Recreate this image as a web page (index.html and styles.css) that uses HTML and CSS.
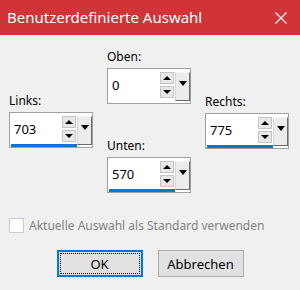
FILE: index.html
```html
<!DOCTYPE html>
<html lang="de">
<head>
  <meta charset="UTF-8" />
  <title>Benutzerdefinierte Auswahl</title>
  <link rel="stylesheet" href="styles.css">
</head>
<body>
  <div class="dialog">
    <div class="titlebar">
      <span class="title">Benutzerdefinierte Auswahl</span>
      <svg class="close" width="12" height="12" viewBox="0 0 12 12">
        <path d="M0.5 0.5 L11.5 11.5 M11.5 0.5 L0.5 11.5" stroke="#fff" stroke-width="1.1" fill="none" />
      </svg>
    </div>

    <div class="content">
      <div class="fields">
        <div class="col side">
          <div class="field">
            <label>Links:</label>
            <div class="spin">
              <div class="edit"><span class="value">703</span><div class="arrows"><span class="arrow up"></span><span class="arrow down"></span></div></div>
              <span class="drop"></span>
            </div>
          </div>
        </div>

        <div class="col middle">
          <div class="field">
            <label>Oben:</label>
            <div class="spin">
              <div class="edit plain"><span class="value">0</span><div class="arrows"><span class="arrow up"></span><span class="arrow down"></span></div></div>
              <span class="drop"></span>
            </div>
          </div>
          <div class="field">
            <label>Unten:</label>
            <div class="spin">
              <div class="edit"><span class="value">570</span><div class="arrows"><span class="arrow up"></span><span class="arrow down"></span></div></div>
              <span class="drop"></span>
            </div>
          </div>
        </div>

        <div class="col side right">
          <div class="field">
            <label>Rechts:</label>
            <div class="spin">
              <div class="edit"><span class="value">775</span><div class="arrows"><span class="arrow up"></span><span class="arrow down"></span></div></div>
              <span class="drop"></span>
            </div>
          </div>
        </div>
      </div>

      <div class="check">
        <span class="checkbox"></span>
        <span class="check-label">Aktuelle Auswahl als Standard verwenden</span>
      </div>

      <div class="buttons">
        <button class="btn default"><span class="focus">OK</span></button>
        <button class="btn">Abbrechen</button>
      </div>
    </div>
  </div>
</body>
</html>
```

FILE: styles.css
```css
body { margin: 0; background: #f0f0f0; font-family: "Noto Sans", "Open Sans", sans-serif; font-size: 12px; color: #000; }
.dialog { width: 300px; height: 290px; overflow: hidden; }

.titlebar { height: 35px; background: #d13438; display: flex; align-items: center; justify-content: space-between; padding: 0 13px 0 7px; box-sizing: border-box; }
.title { color: #fff; font-size: 15px; line-height: 20px; margin-top: -1px; }
.close { display: block; }

.content { padding: 14px 0 0 9px; }
.fields { display: flex; gap: 14px; }
.col { display: flex; flex-direction: column; width: 84px; }
.side { padding-top: 44px; }
.right { padding-top: 45px; }
.middle { gap: 34px; }

.field label { display: block; line-height: 16px; margin-bottom: 3px; }

.spin { display: flex; width: 84px; height: 36px; box-sizing: border-box; border: 1px solid #a0a0a0; background: #fff; }
.edit { width: 66px; margin-left: 1px; display: flex; align-items: center; border-bottom: 3px solid #0078d7; }
.edit.plain { border-bottom-color: #fff; }
.value { flex: 1; padding-left: 3px; font-size: 13px; }
.arrows { display: flex; flex-direction: column; gap: 2px; margin-right: 1px; }
.arrow { width: 12px; height: 10px; border: 1px solid #c4c4c4; background: #e8e8e8; display: flex; align-items: center; justify-content: center; }
.arrow::before { content: ""; border-left: 4px solid transparent; border-right: 4px solid transparent; }
.arrow.up::before { border-bottom: 4px solid #000; }
.arrow.down::before { border-top: 4px solid #000; }

.drop { width: 13px; height: 27px; margin-top: 3px; background: #ececec; border: 1px solid; border-color: #f6f6f6 #6b6b6b #6b6b6b #d6d6d6; display: flex; justify-content: center; padding-top: 8px; box-sizing: content-box; height: 19px; }
.drop::before { content: ""; border-left: 4px solid transparent; border-right: 4px solid transparent; border-top: 5px solid #000; height: 0; }

.check { display: flex; align-items: center; gap: 5px; margin-top: 24px; height: 16px; }
.checkbox { width: 13px; height: 13px; border: 1px solid #cccccc; background: #fff; }
.check-label { color: #838383; }

.buttons { display: flex; justify-content: center; gap: 15px; margin-top: 17px; padding-right: 9px; }
.btn { width: 86px; height: 27px; font-family: inherit; font-size: 13px; background: #e1e1e1; border: 1px solid #adadad; padding: 0; color: #000; }
.btn.default { border: 2px solid #0078d7; padding: 1px; }
.focus { display: flex; align-items: center; justify-content: center; height: 100%; border: 1px dotted #000; box-sizing: border-box; }
```
